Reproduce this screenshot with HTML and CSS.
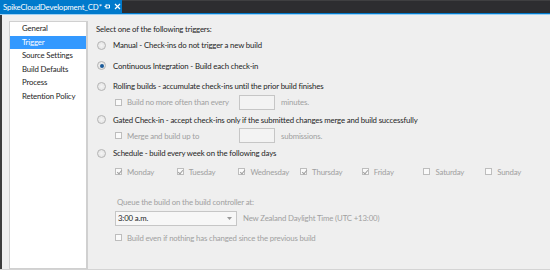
FILE: index.html
```html
<!DOCTYPE html>
<html>
<head>
<meta charset="utf-8">
<link rel="stylesheet" href="styles.css">
</head>
<body>
<div class="app">
  <div class="tabbar">
    <div class="tab">
      <span class="tab-title">SpikeCloudDevelopment_CD*</span>
      <svg class="pin" width="7" height="7" viewBox="0 0 7 7"><path d="M0.5 3.5H2M2 1.5V5.5M2 2H5.5V5H2" fill="none" stroke="#fff" stroke-width="1"/></svg>
      <svg class="close" width="7" height="7" viewBox="0 0 7 7"><path d="M1 1L6 6M6 1L1 6" stroke="#fff" stroke-width="1.2"/></svg>
    </div>
  </div>
  <div class="tabline"></div>
  <div class="main">
    <div class="gutter"></div>
    <div class="side">
      <ul class="nav">
        <li>General</li>
        <li class="active">Trigger</li>
        <li>Source Settings</li>
        <li>Build Defaults</li>
        <li>Process</li>
        <li>Retention Policy</li>
      </ul>
    </div>
    <div class="content">
      <div class="heading">Select one of the following triggers:</div>
      <div class="opt"><span class="radio"></span>Manual - Check-ins do not trigger a new build</div>
      <div class="opt"><span class="radio on"></span>Continuous Integration - Build each check-in</div>
      <div class="opt"><span class="radio"></span>Rolling builds - accumulate check-ins until the prior build finishes</div>
      <div class="sub">
        <span class="chk"></span><span class="lbl">Build no more often than every</span>
        <span class="box"></span><span class="unit">minutes.</span>
      </div>
      <div class="opt"><span class="radio"></span>Gated Check-in - accept check-ins only if the submitted changes merge and build successfully</div>
      <div class="sub">
        <span class="chk"></span><span class="lbl">Merge and build up to</span>
        <span class="box"></span><span class="unit">submissions.</span>
      </div>
      <div class="opt"><span class="radio"></span>Schedule - build every week on the following days</div>
      <div class="days">
        <div class="day"><span class="chk checked"></span>Monday</div>
        <div class="day"><span class="chk checked"></span>Tuesday</div>
        <div class="day"><span class="chk checked"></span>Wednesday</div>
        <div class="day"><span class="chk checked"></span>Thursday</div>
        <div class="day"><span class="chk checked"></span>Friday</div>
        <div class="day"><span class="chk"></span>Saturday</div>
        <div class="day"><span class="chk"></span>Sunday</div>
      </div>
      <div class="queue">Queue the build on the build controller at:</div>
      <div class="timerow">
        <div class="select"><span>3:00 a.m.</span><svg width="5" height="3" viewBox="0 0 5 3"><path d="M0 0H5L2.5 3Z" fill="#999"/></svg></div>
        <span class="tz">New Zealand Daylight Time (UTC +13:00)</span>
      </div>
      <div class="even"><span class="chk"></span>Build even if nothing has changed since the previous build</div>
    </div>
  </div>
</div>
</body>
</html>
```

FILE: styles.css
```css
* { box-sizing: border-box; margin: 0; padding: 0; }
html, body { width: 550px; height: 270px; overflow: hidden; }
body {
  font-family: Lato, "Open Sans", sans-serif;
  font-size: 7.8px;
  letter-spacing: -0.15px;
  color: #1e1e1e;
  background: #efefef;
}
.app { display: flex; flex-direction: column; height: 270px; }
.tabbar {
  height: 13px;
  background: #2d2d30;
  border-top: 1px solid #3f3f41;
  display: flex;
}
.tab {
  width: 122px;
  margin-top: -1px;
  height: 13px;
  background: #007acc;
  color: #fff;
  display: flex;
  align-items: center;
  padding-left: 3px;
}
.tab-title { flex: 1; white-space: nowrap; }
.pin { margin-right: 3px; flex: none; }
.close { margin-right: 1px; flex: none; }
.tabline { height: 2px; background: #007acc; border-bottom: 1px solid #9bd0f5; }
.main { flex: 1; display: flex; border-bottom: 1px solid #d4d4d4; }
.gutter { width: 2px; background: #3c3c3c; }
.side { width: 86px; padding: 6px 0 0 7px; display: flex; }
.nav {
  list-style: none;
  flex: 1;
  background: #fff;
  border: 1px solid #d0d0d0;
  border-right: 2px solid #d0d0d0;
}
.nav li { height: 13.5px; line-height: 13.5px; padding-left: 12px; white-space: nowrap; }
.nav li.active { background: #3399ff; color: #fff; }
.content { flex: 1; padding: 8px 0 0 8px; }
.heading { height: 12px; line-height: 12px; }
.opt { display: flex; align-items: center; height: 20.5px; white-space: nowrap; padding-left: 1px; }
.radio {
  width: 9px; height: 9px; border-radius: 50%;
  border: 1px solid #b4b4b4;
  background: radial-gradient(circle, #f4f4f4 0, #e0e0e0 100%);
  margin-right: 7px;
  flex: none;
  display: flex; align-items: center; justify-content: center;
}
.radio.on::after {
  content: ""; width: 4px; height: 4px; border-radius: 50%; background: #1a5a99;
}
.sub { display: flex; align-items: center; height: 15px; padding-left: 19px; color: #a0a0a0; white-space: nowrap; margin-top: -2px; }
.chk {
  width: 7px; height: 7px; border: 1px solid #bdbdbd; background: #fafafa;
  margin-right: 5px; flex: none; position: relative;
}
.chk.checked::after {
  content: ""; position: absolute; left: 1.5px; top: 0px; width: 2px; height: 4px;
  border: solid #a0a0a0; border-width: 0 1px 1px 0; transform: rotate(40deg);
}
.sub .lbl { width: 112px; }
.box { width: 36px; height: 15px; border: 1px solid #c6c6c6; background: #f3f3f3; margin-right: 6px; }
.unit { color: #a0a0a0; }
.days { display: flex; padding-left: 19px; color: #a0a0a0; height: 16px; align-items: center; }
.day { display: flex; align-items: center; width: 61.7px; white-space: nowrap; }
.queue { color: #a0a0a0; padding-left: 21px; margin-top: 16px; height: 12px; line-height: 12px; }
.timerow { display: flex; align-items: center; padding-left: 19px; margin-top: 3px; height: 15px; }
.select {
  width: 122px; height: 15px; border: 1px solid #c6c6c6; background: #f7f7f7;
  display: flex; align-items: center; justify-content: space-between; padding: 0 4px 0 2px; margin-right: 6px;
  color: #1e1e1e;
}
.tz { color: #a0a0a0; }
.even { display: flex; align-items: center; padding-left: 19px; color: #a0a0a0; margin-top: 6px; height: 12px; white-space: nowrap; }
```
